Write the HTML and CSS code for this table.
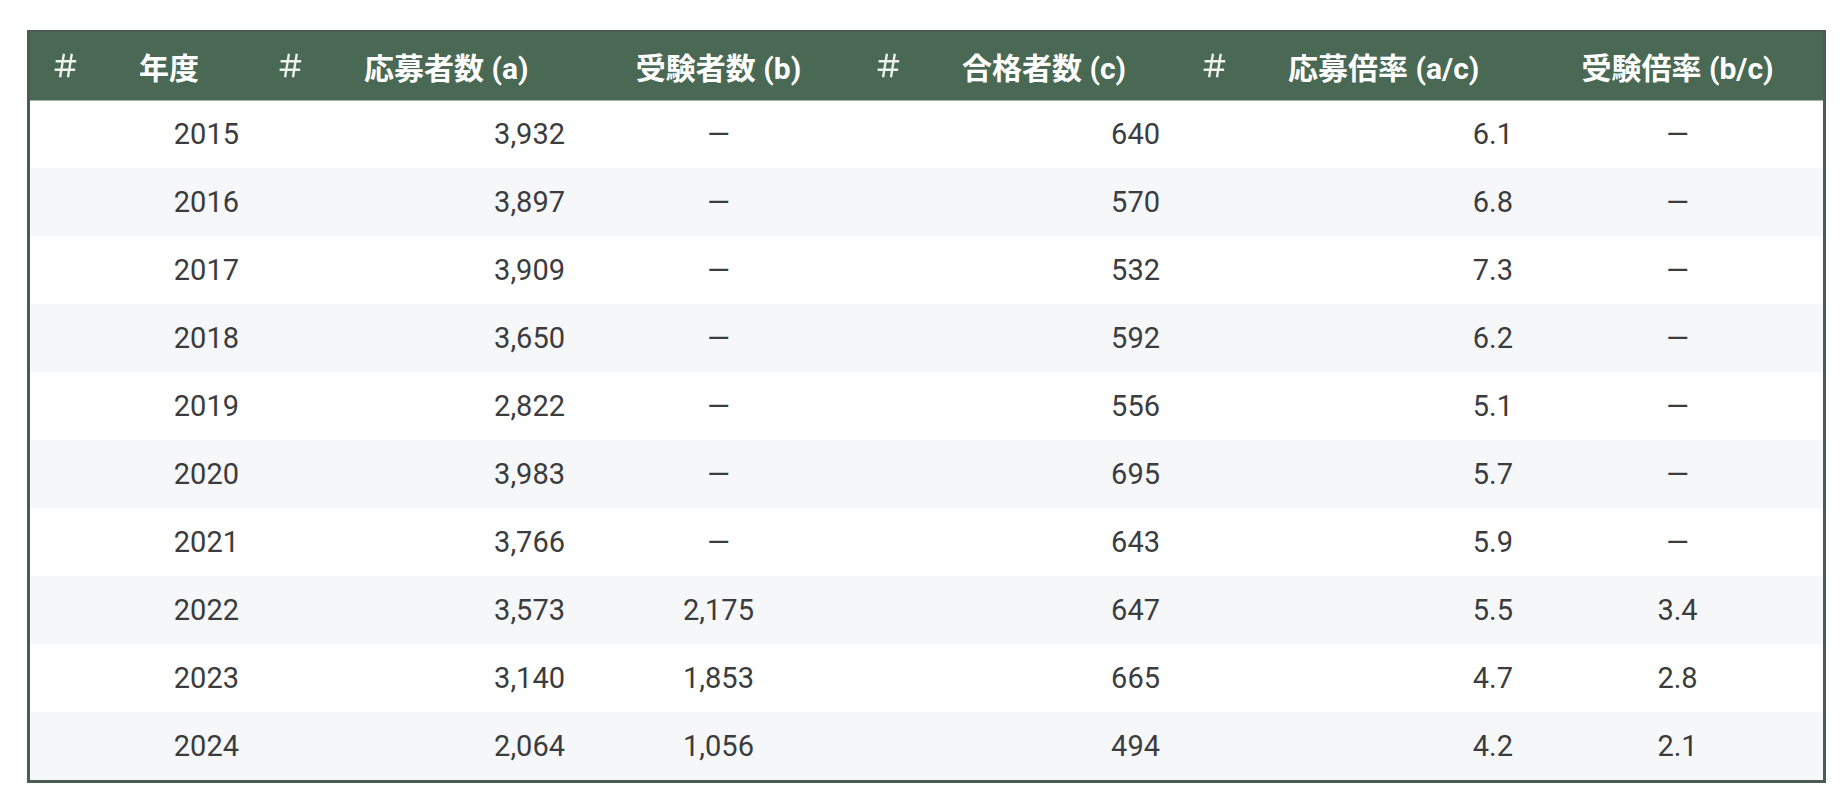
FILE: index.html
```html
<!DOCTYPE html>
<html lang="ja">
<head>
<meta charset="utf-8">
<title>応募・受験・合格者数</title>
<link rel="stylesheet" href="styles.css">
</head>
<body>
<div class="page">
  <div class="table-frame">
    <table class="stats">
      <colgroup>
        <col class="c-year">
        <col class="c-apply">
        <col class="c-exam">
        <col class="c-pass">
        <col class="c-rate-a">
        <col class="c-rate-b">
      </colgroup>
      <thead>
        <tr>
          <th class="th-num"><div class="th-in"><svg class="hash" viewBox="0 0 24 24"><path d="M10.6 1.5 L7.2 22.5 M17.6 1.5 L14.2 22.5 M3.2 8.2 H21.5 M2.3 15.8 H20.6"/></svg><span>年度</span></div></th>
          <th class="th-num"><div class="th-in"><svg class="hash" viewBox="0 0 24 24"><path d="M10.6 1.5 L7.2 22.5 M17.6 1.5 L14.2 22.5 M3.2 8.2 H21.5 M2.3 15.8 H20.6"/></svg><span>応募者数 (a)</span></div></th>
          <th class="th-text">受験者数 (b)</th>
          <th class="th-num"><div class="th-in"><svg class="hash" viewBox="0 0 24 24"><path d="M10.6 1.5 L7.2 22.5 M17.6 1.5 L14.2 22.5 M3.2 8.2 H21.5 M2.3 15.8 H20.6"/></svg><span>合格者数 (c)</span></div></th>
          <th class="th-num"><div class="th-in"><svg class="hash" viewBox="0 0 24 24"><path d="M10.6 1.5 L7.2 22.5 M17.6 1.5 L14.2 22.5 M3.2 8.2 H21.5 M2.3 15.8 H20.6"/></svg><span>応募倍率 (a/c)</span></div></th>
          <th class="th-text">受験倍率 (b/c)</th>
        </tr>
      </thead>
      <tbody>
        <tr><td class="num year">2015</td><td class="num">3,932</td><td class="txt">—</td><td class="num">640</td><td class="num">6.1</td><td class="txt">—</td></tr>
        <tr><td class="num year">2016</td><td class="num">3,897</td><td class="txt">—</td><td class="num">570</td><td class="num">6.8</td><td class="txt">—</td></tr>
        <tr><td class="num year">2017</td><td class="num">3,909</td><td class="txt">—</td><td class="num">532</td><td class="num">7.3</td><td class="txt">—</td></tr>
        <tr><td class="num year">2018</td><td class="num">3,650</td><td class="txt">—</td><td class="num">592</td><td class="num">6.2</td><td class="txt">—</td></tr>
        <tr><td class="num year">2019</td><td class="num">2,822</td><td class="txt">—</td><td class="num">556</td><td class="num">5.1</td><td class="txt">—</td></tr>
        <tr><td class="num year">2020</td><td class="num">3,983</td><td class="txt">—</td><td class="num">695</td><td class="num">5.7</td><td class="txt">—</td></tr>
        <tr><td class="num year">2021</td><td class="num">3,766</td><td class="txt">—</td><td class="num">643</td><td class="num">5.9</td><td class="txt">—</td></tr>
        <tr><td class="num year">2022</td><td class="num">3,573</td><td class="txt">2,175</td><td class="num">647</td><td class="num">5.5</td><td class="txt">3.4</td></tr>
        <tr><td class="num year">2023</td><td class="num">3,140</td><td class="txt">1,853</td><td class="num">665</td><td class="num">4.7</td><td class="txt">2.8</td></tr>
        <tr><td class="num year">2024</td><td class="num">2,064</td><td class="txt">1,056</td><td class="num">494</td><td class="num">4.2</td><td class="txt">2.1</td></tr>
      </tbody>
    </table>
  </div>
</div>
</body>
</html>
```

FILE: styles.css
```css
html, body {
  margin: 0;
  padding: 0;
  background: #ffffff;
}

.page {
  padding: 30px 17px 0 27px;
  font-family: Roboto, "Noto Sans CJK JP", sans-serif;
}

.table-frame {
  width: 1799px;
  box-sizing: border-box;
  border: 3px solid #4b5c52;
  border-top-width: 2px;
}

.stats {
  width: 100%;
  table-layout: fixed;
  border-collapse: collapse;
  border-spacing: 0;
}

.c-year { width: 225px; }
.c-apply { width: 329px; }
.c-exam { width: 269px; }
.c-pass { width: 326px; }
.c-rate-a { width: 353px; }
.c-rate-b { width: 291px; }

.stats thead tr {
  height: 68px;
  background: #4a6954;
}

.stats th {
  padding: 0;
  color: #ffffff;
  font-size: 30px;
  font-weight: 700;
  white-space: nowrap;
  border-bottom: 1px solid #a9b3ad;
}

.th-num {
  text-align: left;
}

.th-in {
  display: flex;
  align-items: center;
  padding-left: 22px;
}

.hash {
  width: 27px;
  height: 27px;
  margin-right: 60px;
  flex: none;
  fill: none;
  stroke: #eef2ef;
  stroke-width: 2.1;
  stroke-linecap: butt;
}

.th-text {
  text-align: center;
}

.stats tbody tr {
  height: 68px;
}

.stats tbody tr:nth-child(odd) {
  background: #ffffff;
}

.stats tbody tr:nth-child(even) {
  background: #f6f7f9;
}

.stats td {
  padding: 0;
  font-size: 29px;
  font-weight: 400;
  color: #3b3c3e;
  white-space: nowrap;
}

.stats td.num {
  text-align: right;
  padding-right: 19px;
}

.stats td.year {
  padding-right: 16px;
}

.stats td.txt {
  text-align: center;
}
```
